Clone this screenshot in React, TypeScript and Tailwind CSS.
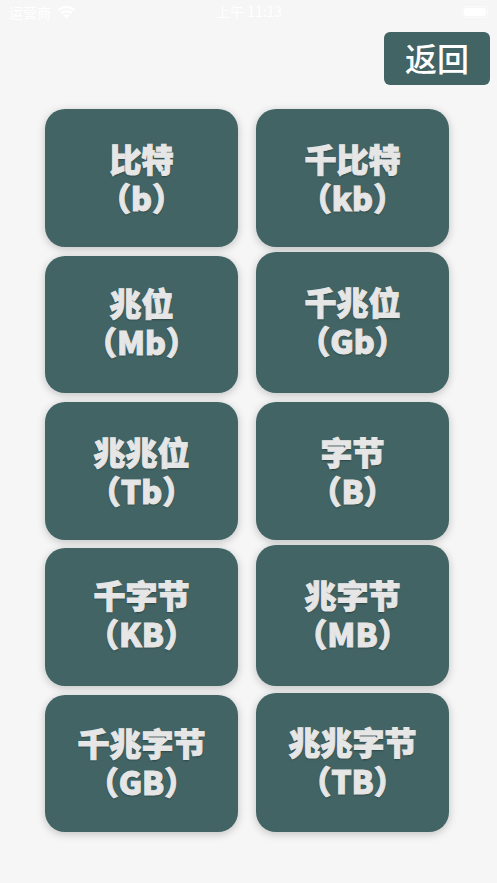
const LEFT = [
  { title: '比特', unit: '（b）', h: 'h-[138px]', mt: '', pb: 'pb-0' },
  { title: '兆位', unit: '（Mb）', h: 'h-[137px]', mt: 'mt-[9px]', pb: 'pb-[6px]' },
  { title: '兆兆位', unit: '（Tb）', h: 'h-[138px]', mt: 'mt-[9px]', pb: 'pb-0' },
  { title: '千字节', unit: '（KB）', h: 'h-[138px]', mt: 'mt-2', pb: 'pb-[6px]' },
  { title: '千兆字节', unit: '（GB）', h: 'h-[137px]', mt: 'mt-[9px]', pb: 'pb-1' },
];

const RIGHT = [
  { title: '千比特', unit: '（kb）', h: 'h-[138px]', mt: '', pb: 'pb-0' },
  { title: '千兆位', unit: '（Gb）', h: 'h-[141px]', mt: 'mt-[5px]', pb: 'pb-1' },
  { title: '字节', unit: '（B）', h: 'h-[138px]', mt: 'mt-[9px]', pb: 'pb-0' },
  { title: '兆字节', unit: '（MB）', h: 'h-[141px]', mt: 'mt-[5px]', pb: 'pb-1' },
  { title: '兆兆字节', unit: '（TB）', h: 'h-[139px]', mt: 'mt-[7px]', pb: 'pb-1' },
];

interface UnitCardProps {
  title: string;
  unit: string;
  h: string;
  mt: string;
  pb: string;
}

function UnitCard({ title, unit, h, mt, pb }: UnitCardProps) {
  return (
    <button
      className={`${h} ${mt} ${pb} w-[193px] flex flex-col items-center justify-center rounded-[20px] bg-[#426464] text-[#e6e6e6] shadow-[0_2px_9px_rgba(0,0,0,0.22)] [font-family:'Noto_Sans_CJK_SC',sans-serif] font-black text-[32px] [-webkit-text-stroke:1px_#e6e6e6] [text-shadow:0_1px_2px_rgba(0,0,0,0.45)]`}
    >
      <div className="h-[39px] leading-[39px]">{title}</div>
      <div className="h-[39px] leading-[39px] whitespace-nowrap">{unit}</div>
    </button>
  );
}

export default function App() {
  return (
    <div className="w-[497px] h-[883px] overflow-hidden flex flex-col bg-[#f6f6f6] [font-family:'Noto_Sans_CJK_SC',sans-serif]">
      {/* status bar */}
      <div className="relative h-6 shrink-0 flex items-center justify-between pl-[9px] pr-[9px] text-white text-sm">
        <div className="flex items-center gap-[6px]">
          <span>运营商</span>
          <svg width="19" height="14" viewBox="0 0 19 14" fill="white">
            <path d="M9.5 1C6 1 2.900 2.300.6 4.500l1.600 1.700C4.100 4.400 6.700 3.300 9.500 3.300s5.400 1.100 7.300 2.900l1.600-1.700C16.100 2.300 13 1 9.500 1z" />
            <path d="M9.500 5.200c-2.300 0-4.400.9-5.900 2.300l1.600 1.700c1.100-1.100 2.700-1.700 4.300-1.700s3.200.6 4.300 1.700l1.600-1.700c-1.500-1.400-3.600-2.300-5.900-2.300z" />
            <path d="M9.500 9.400c-1.100 0-2.100.4-2.900 1.200l2.900 3 2.900-3c-.8-.8-1.800-1.200-2.900-1.200z" />
          </svg>
        </div>
        <span className="absolute left-[216px] top-[1px]">上午 11:13</span>
        <div className="w-[26px] h-[12px] rounded-[4px] border border-[#fbfbfb] p-[1px]">
          <div className="w-full h-full rounded-[2px] bg-white" />
        </div>
      </div>

      {/* back button */}
      <div className="flex justify-end pr-[7px] mt-2">
        <button className="w-[106px] h-[53px] pb-1 rounded-[6px] bg-[#426464] text-white text-[32px] font-medium leading-none">
          返回
        </button>
      </div>

      {/* unit cards */}
      <div className="flex gap-[18px] pl-[45px] mt-6">
        <div className="flex flex-col">
          {LEFT.map((c) => (
            <UnitCard key={c.title} {...c} />
          ))}
        </div>
        <div className="flex flex-col">
          {RIGHT.map((c) => (
            <UnitCard key={c.title} {...c} />
          ))}
        </div>
      </div>
    </div>
  );
}
